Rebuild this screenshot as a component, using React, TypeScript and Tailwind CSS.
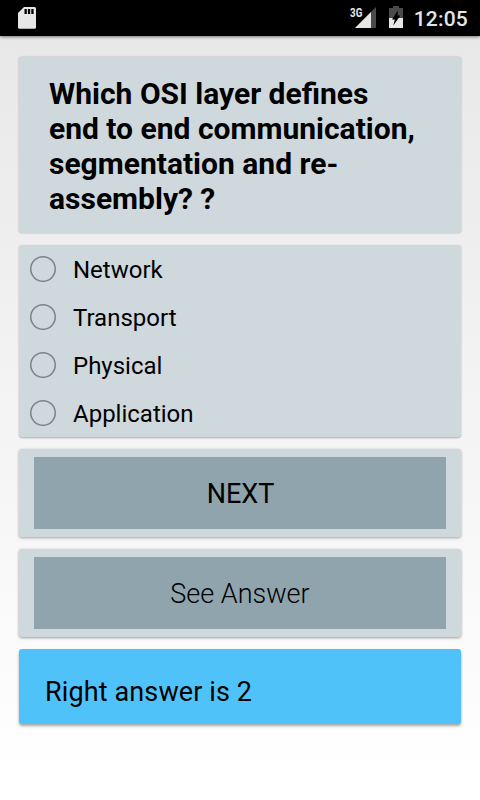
import React, { useState } from 'react';

const OPTIONS = ['Network', 'Transport', 'Physical', 'Application'];

const SdCardIcon: React.FC = () => (
  <svg width="18" height="22" viewBox="0 0 18 22" fill="#e6e6e6">
    <path d="M6 0h10.5A1.5 1.5 0 0 1 18 1.500v18.700a1.500 1.500 0 0 1-1.500 1.500h-15A1.500 1.500 0 0 1 0 20.200V6z" />
    <path d="M6.500 2h2.300v5H6.500zM9.900 2h2.300v5H9.900zM13.300 2h2.300v5h-2.300z" fill="#000" />
  </svg>
);

const SignalIcon: React.FC = () => (
  <svg width="21" height="21" viewBox="0 0 21 21">
    <path d="M21 0v21H0z" fill="#4a4a4a" />
    <path d="M16 5v16H0z" fill="#e6e6e6" />
  </svg>
);

const BatteryIcon: React.FC = () => (
  <svg width="14" height="22" viewBox="0 0 14 22">
    <path d="M4 0h6v2h4v10H0V2h4z" fill="#4a4a4a" />
    <path d="M0 12h14v10H0z" fill="#e6e6e6" />
    <path d="M8.700 4.500L3 13.500h2.800L4.300 19.500L11.500 9.500H8.700z" fill="#000" />
  </svg>
);

const StatusBar: React.FC = () => (
  <div className="flex h-9 items-start justify-between bg-black pl-[18px] pr-3 shadow-[0_1px_3px_rgba(0,0,0,0.5)]">
    <div className="pt-[7px]">
      <SdCardIcon />
    </div>
    <div className="flex items-start">
      <span className="-mr-2 origin-right scale-x-75 pt-[6px] text-[13px] font-bold leading-[13px] text-[#e6e6e6]">3G</span>
      <div className="pt-[7px]">
        <SignalIcon />
      </div>
      <div className="ml-[13px] pt-[6px]">
        <BatteryIcon />
      </div>
      <span className="ml-[11px] pt-[7px] text-[21px] font-medium leading-6 tracking-[0.2px] text-[#e6e6e6]">12:05</span>
    </div>
  </div>
);

const Card: React.FC<{ className: string; children: React.ReactNode }> = ({ className, children }) => (
  <div className={`rounded-[3px] ${className}`}>{children}</div>
);

const App: React.FC = () => {
  const [selected, setSelected] = useState<number | null>(null);

  return (
    <div className="h-[800px] w-[480px] overflow-hidden bg-linear-to-b from-[#e7e7e7] to-white to-97% font-['Roboto',sans-serif] text-black">
      <StatusBar />
      <div className="flex flex-col gap-3 px-[19px] pt-[21px]">
        <Card className="h-[176px] bg-[#cfd8dd] pl-[30px] pr-6 pt-[19px] shadow-[0_0_2px_rgba(0,0,0,0.3)]">
          <h1 className="text-[30px] font-bold leading-[35px]">
            Which OSI layer defines
            <br />
            end to end communication,
            <br />
            segmentation and re-
            <br />
            assembly? ?
          </h1>
        </Card>
        <Card className="bg-[#cfd8dd] shadow-[0_1px_2px_rgba(0,0,0,0.3)]">
          {OPTIONS.map((option, index) => (
            <label key={option} className="flex h-12 items-center pl-[11px]">
              <input
                type="radio"
                name="answer"
                checked={selected === index}
                onChange={() => setSelected(index)}
                className="size-[26px] appearance-none rounded-full shadow-[inset_0_0_0_1.5px_#7c8285] checked:border-8"
              />
              <span className="ml-[17px] pt-0.5 text-[24px] leading-7">{option}</span>
            </label>
          ))}
        </Card>
        <Card className="bg-[#cfd8dd] px-[15px] py-2 shadow-[0_1px_3px_rgba(0,0,0,0.35)]">
          <button className="block h-[72px] w-full bg-[#90a4ad] pl-px pt-0.5 text-[27px]">NEXT</button>
        </Card>
        <Card className="bg-[#cfd8dd] px-[15px] py-2 shadow-[0_1px_3px_rgba(0,0,0,0.4)]">
          <button className="block h-[72px] w-full bg-[#90a4ad] pt-0.5 text-[27px] font-light">See Answer</button>
        </Card>
        <Card className="h-[75px] bg-[#4fc3f9] pl-[26px] pt-[27px] shadow-[0_2px_3px_rgba(0,0,0,0.35)]">
          <p className="text-[27px] leading-8 tracking-[0.12px]">Right answer is 2</p>
        </Card>
      </div>
    </div>
  );
};

export default App;
